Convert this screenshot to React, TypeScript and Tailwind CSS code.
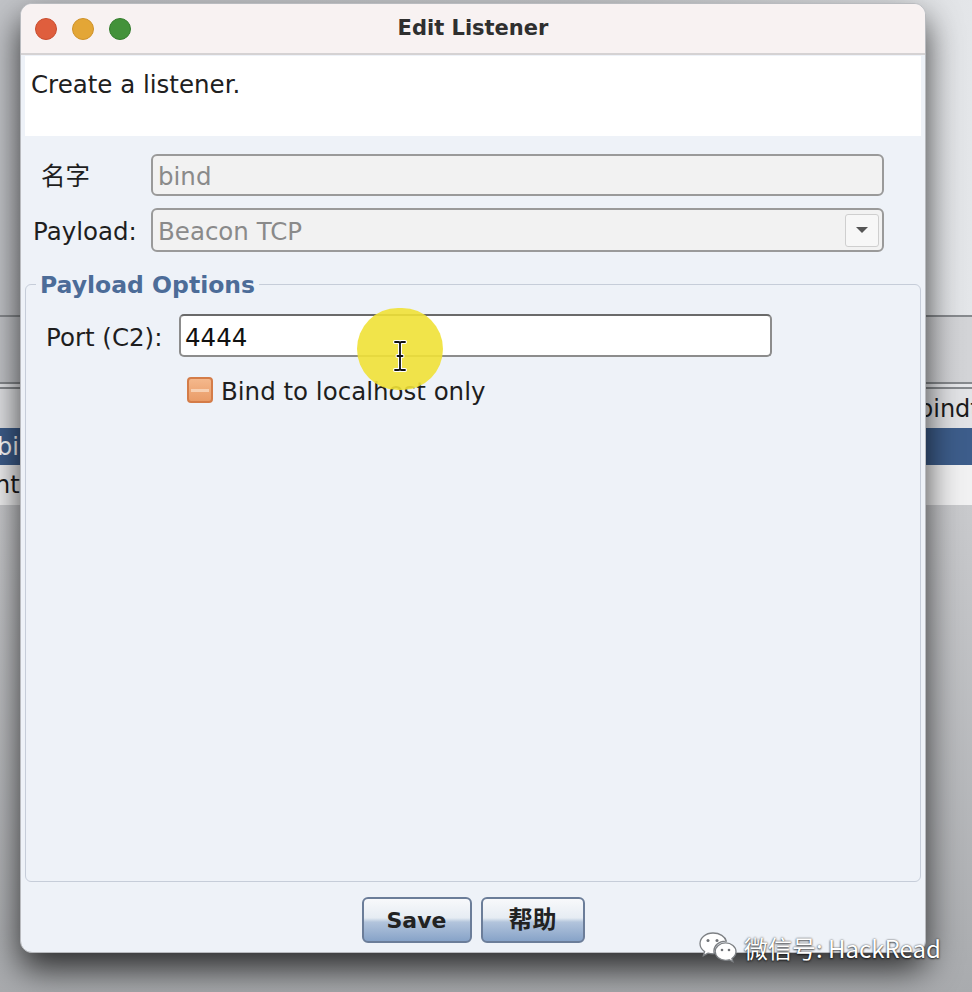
import React from "react";

const FONT = "font-['DejaVu_Sans','Noto_Sans_CJK_SC',sans-serif]";

function WeChatIcon() {
  return (
    <svg width="40" height="34" viewBox="0 0 40 34">
      <path
        d="M15 2C7.3 2 2 7 2 12.6c0 3.3 1.8 6.1 4.6 8l-1.2 4 4.6-2.5c1.6.5 3.2.7 5 .7.4 0 .9 0 1.3-.1-.3-.9-.4-1.8-.4-2.7 0-5.5 5.1-9.8 11.5-9.8h.9C27.2 5.6 21.7 2 15 2z"
        fill="#fff"
        stroke="#7d8084"
        strokeWidth="1.3"
      />
      <circle cx="10" cy="9.5" r="1.5" fill="#6f7276" />
      <circle cx="19" cy="9.5" r="1.5" fill="#6f7276" />
      <path
        d="M38 20.6c0-4.8-4.7-8.7-10.4-8.7S17.2 15.8 17.2 20.6s4.7 8.7 10.4 8.7c1.3 0 2.5-.2 3.6-.5l3.7 2-1-3.3c2.5-1.6 4.1-4.1 4.1-6.9z"
        fill="#fff"
        stroke="#7d8084"
        strokeWidth="1.3"
      />
      <circle cx="24" cy="19" r="1.3" fill="#6f7276" />
      <circle cx="31" cy="19" r="1.3" fill="#6f7276" />
    </svg>
  );
}

function IBeam() {
  return (
    <svg width="16" height="32" viewBox="0 0 16 32">
      <path
        d="M3 2h3.5c.8 0 1.5.6 1.5 1.4C8 2.6 8.7 2 9.5 2H13M8 3.5v25M3 30h3.5c.8 0 1.5-.6 1.5-1.4 0 .8.7 1.4 1.5 1.4H13M5.5 16h5"
        fill="none"
        stroke="#fff"
        strokeWidth="4"
        strokeLinecap="round"
      />
      <path
        d="M3 2h3.5c.8 0 1.5.6 1.5 1.4C8 2.6 8.7 2 9.5 2H13M8 3.5v25M3 30h3.5c.8 0 1.5-.6 1.5-1.4 0 .8.7 1.4 1.5 1.4H13M5.5 16h5"
        fill="none"
        stroke="#111"
        strokeWidth="1.8"
        strokeLinecap="round"
      />
    </svg>
  );
}

function BackgroundApp() {
  return (
    <div className="flex flex-col h-full text-[24px] leading-none">
      <div className="h-[315px]" />
      <div className="h-[2px] bg-[#878a8e]" />
      <div className="h-[65px] bg-[linear-gradient(90deg,#c3c5c9,#d3d4d7)]" />
      <div className="h-[2px] bg-[#878a8e]" />
      <div className="h-[3px] bg-[#e6e7ea]" />
      <div className="h-[2px] bg-[#878a8e]" />
      <div className="h-[39px] bg-[#e2e3e6] flex items-center text-[#1b1b1b]">
        <span className="ml-[918px] whitespace-nowrap">bindt</span>
      </div>
      <div className="h-[37px] bg-[#3d5d8b] flex items-center text-white">
        <span className="ml-[-3px]">bind</span>
      </div>
      <div className="h-[40px] bg-[#f1f1f2] flex items-center text-[#1b1b1b]">
        <span className="ml-[-5px]">http</span>
      </div>
      <div className="flex-1 bg-[linear-gradient(180deg,#c9cacd,#a9abae)]" />
    </div>
  );
}

function TrafficLights() {
  return (
    <div className="flex items-center gap-[15px] pl-[14px]">
      <span className="w-[22px] h-[22px] rounded-full bg-[#df5e3d] border border-[#c94d2f]" />
      <span className="w-[22px] h-[22px] rounded-full bg-[#e3a636] border border-[#cf9229]" />
      <span className="w-[22px] h-[22px] rounded-full bg-[#43923a] border border-[#347d2d]" />
    </div>
  );
}

function DisabledField({ value, dropdown }: { value: string; dropdown?: boolean }) {
  return (
    <div
      className={`flex items-center w-[733px] ${dropdown ? "h-[44px]" : "h-[42px]"} rounded-[6px] border-2 border-[#9a9a9a] bg-[#f2f2f2] pl-[5px] pr-[3px]`}
    >
      <span className="flex-1 pt-[5px] text-[#8a8a8a]">{value}</span>
      {dropdown && (
        <span className="flex items-center justify-center w-[34px] h-[33px] rounded-[3px] border border-[#cfcfcf] bg-[#f7f7f7]">
          <span className="w-0 h-0 border-l-[6px] border-r-[6px] border-t-[6px] border-l-transparent border-r-transparent border-t-[#555]" />
        </span>
      )}
    </div>
  );
}

function Dialog() {
  return (
    <div className="absolute left-[20px] top-[3px] w-[906px] h-[950px] rounded-[12px] overflow-hidden bg-[#eef2f8] border border-[#b9bbbf] shadow-[0_16px_34px_rgba(0,0,0,0.75)] flex flex-col">
      {/* Title bar */}
      <div className="grid grid-cols-[1fr_auto_1fr] items-center h-[51px] bg-[#f8f2f2] border-b-2 border-[#d5d2d3]">
        <TrafficLights />
        <div className="font-bold text-[21px] text-[#2f2f2f]">Edit Listener</div>
        <div />
      </div>

      {/* Banner */}
      <div className="mx-[4px] mt-[1px] h-[80px] bg-white pl-[6px] pt-[14px] leading-[30px] text-[#202020]">
        Create a listener.
      </div>

      {/* Fields */}
      <div className="flex flex-col gap-[12px] mt-[18px]">
        <div className="flex items-center">
          <span className="w-[130px] pl-[20px] pt-[5px] text-[#1e1e1e]">名字</span>
          <DisabledField value="bind" />
        </div>
        <div className="flex items-center">
          <span className="w-[130px] pl-[12px] pt-[5px] text-[#1e1e1e]">Payload:</span>
          <DisabledField value="Beacon TCP" dropdown />
        </div>
      </div>

      {/* Payload Options */}
      <fieldset className="flex-1 mx-[4px] mt-[16px] border border-[#c6cdd9] rounded-[6px] px-0 pb-0">
        <legend className="ml-[10px] px-[4px] pt-[2px] font-bold text-[23.5px] text-[#4c6c98] leading-[30px]">
          Payload Options
        </legend>
        <div className="flex items-center mt-[14px]">
          <span className="w-[153px] pl-[20px] pt-[5px] text-[#1e1e1e]">Port (C2):</span>
          <div className="flex items-center w-[593px] h-[43px] rounded-[5px] border-2 border-[#8c8c8c] border-t-[#6a6a6a] bg-white pl-[4px] pt-[5px] text-[#111]">
            4444
          </div>
        </div>
        <div className="flex items-center mt-[13px] ml-[161px] gap-[8px]">
          <span className="flex flex-col justify-center w-[26px] h-[26px] rounded-[4px] border-2 border-[#d47c48] bg-[linear-gradient(180deg,#f4b88c,#e99c68)]">
            <span className="h-[3px] mx-[2px] bg-[#f7d0b2]" />
          </span>
          <span className="pt-[4px] text-[#1e1e1e]">Bind to localhost only</span>
        </div>
      </fieldset>

      {/* Buttons */}
      <div className="flex justify-center gap-[9px] mt-[15px] mb-[9px]">
        <button className="w-[110px] h-[46px] rounded-[6px] border-2 border-[#6b7d99] bg-[linear-gradient(180deg,#f8f9fb_0%,#e6ecf3_45%,#b2c4dc_55%,#87a3c8_100%)] font-bold text-[22px] text-[#222]">
          Save
        </button>
        <button className="w-[104px] h-[46px] rounded-[6px] border-2 border-[#6b7d99] bg-[linear-gradient(180deg,#f8f9fb_0%,#e6ecf3_45%,#b2c4dc_55%,#87a3c8_100%)] font-bold text-[24px] text-[#222]">
          帮助
        </button>
      </div>
    </div>
  );
}

export default function App() {
  return (
    <div
      className={`relative w-[972px] h-[992px] overflow-hidden ${FONT} text-[24.5px] bg-[linear-gradient(90deg,#c2c4c8_0%,#c8cacd_60%,#e4e6e9_100%)]`}
    >
      <BackgroundApp />
      <Dialog />

      {/* Presenter's cursor highlight */}
      <div className="absolute left-[357px] top-[308px] w-[86px] h-[82px] rounded-full bg-[#efe136] opacity-90" />
      <div className="absolute left-[392px] top-[340px]">
        <IBeam />
      </div>

      {/* Watermark */}
      <div className="absolute left-[698px] top-[930px] flex items-center gap-[6px] font-['Noto_Sans_CJK_SC',sans-serif] text-[24px] text-white [text-shadow:0_0_2px_rgba(0,0,0,0.7),0_1px_2px_rgba(0,0,0,0.6)]">
        <WeChatIcon />
        <span>微信号: HackRead</span>
      </div>
    </div>
  );
}
